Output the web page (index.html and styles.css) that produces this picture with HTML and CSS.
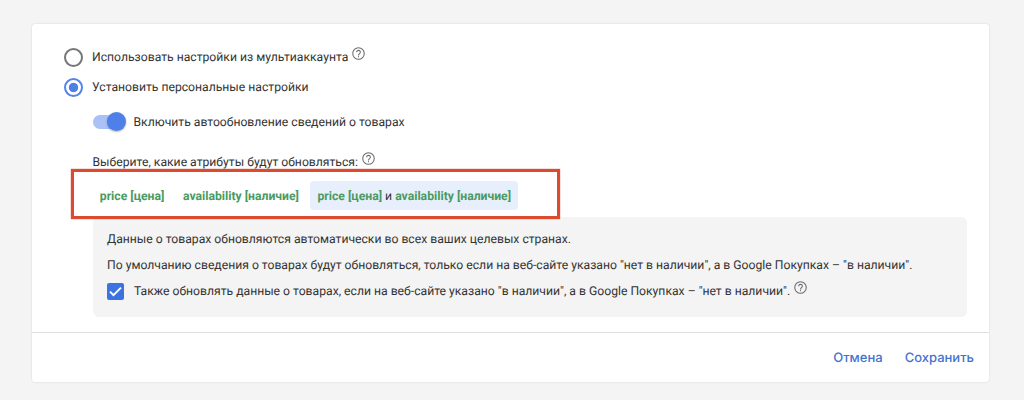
FILE: index.html
```html
<!DOCTYPE html>
<html lang="ru">
<head>
    <meta charset="UTF-8">
    <meta name="viewport" content="width=device-width, initial-scale=1.0">
    <title>Автообновление товаров</title>
    <link rel="stylesheet" href="styles.css">
</head>
<body>
    <svg class="defs" width="0" height="0">
        <symbol id="help" viewBox="0 0 24 24">
            <circle cx="12" cy="12" r="9.2"/>
            <path d="M9 10a3 3 0 1 1 6 0c0 2.1-3 2.3-3 5"/>
            <path d="M12 16.2v1.8"/>
        </symbol>
    </svg>

    <div class="card">
        <div class="settings">
            <div class="row">
                <span class="radio"></span>
                <span>Использовать настройки из мультиаккаунта</span>
                <svg class="help"><use href="#help"/></svg>
            </div>
            <div class="row">
                <span class="radio checked"></span>
                <span>Установить персональные настройки</span>
            </div>

            <div class="details">
                <div class="row toggle-row">
                    <span class="toggle"></span>
                    <span>Включить автообновление сведений о товарах</span>
                </div>
                <div class="row label-row">
                    <span>Выберите, какие атрибуты будут обновляться:</span>
                    <svg class="help"><use href="#help"/></svg>
                </div>

                <div class="attributes">
                    <span class="chip"><b>price [цена]</b></span>
                    <span class="chip"><b>availability [наличие]</b></span>
                    <span class="chip selected"><b>price [цена]</b> и <b>availability [наличие]</b></span>
                    <div class="highlight"></div>
                </div>

                <div class="panel">
                    <p>Данные о товарах обновляются автоматически во всех ваших целевых странах.</p>
                    <p>По умолчанию сведения о товарах будут обновляться, только если на веб-сайте указано "нет в наличии", а в Google Покупках – "в наличии".</p>
                    <div class="check-row">
                        <span class="checkbox">
                            <svg viewBox="0 0 17 17"><path d="M3 8.6l3.5 3.5L14 4.6"/></svg>
                        </span>
                        <span>Также обновлять данные о товарах, если на веб-сайте указано "в наличии", а в Google Покупках – "нет в наличии".</span>
                        <svg class="help"><use href="#help"/></svg>
                    </div>
                </div>
            </div>
        </div>

        <div class="actions">
            <a class="action">Отмена</a>
            <a class="action">Сохранить</a>
        </div>
    </div>
</body>
</html>
```
FILE: styles.css
```css
* {
    box-sizing: border-box;
}
body {
    margin: 0;
    padding: 24px 35px 0 32px;
    height: 400px;
    overflow: hidden;
    background-color: #f4f4f4;
    color: #333;
    font-family: Roboto, "Noto Sans", sans-serif;
    font-size: 12.18px;
    text-rendering: geometricPrecision;
    white-space: nowrap;
}
.defs {
    position: absolute;
}
.card {
    height: 358px;
    background-color: #fff;
    border-radius: 3px;
    box-shadow: 0 0 2px rgba(0, 0, 0, 0.16);
}
.settings {
    height: 308px;
    padding: 18px 22px 0 32px;
}
.row {
    display: flex;
    align-items: center;
    height: 30px;
}
.radio {
    width: 19px;
    height: 19px;
    margin-right: 9px;
    border: 2px solid #77777a;
    border-radius: 50%;
}
.radio.checked {
    border-color: #5383ec;
    background: radial-gradient(circle, #4f80ea 4.3px, #fff 5.1px);
}
.help {
    width: 15px;
    height: 15px;
    margin: 0 0 7px 3px;
    fill: none;
    stroke: #6c6c6c;
    stroke-width: 1.7;
}
.details {
    margin-left: 28.5px;
}
.toggle-row {
    height: 40px;
}
.toggle {
    position: relative;
    width: 30px;
    height: 14px;
    margin-right: 11px;
    border-radius: 7px;
    background-color: #a9c1f5;
}
.toggle::after {
    content: "";
    position: absolute;
    top: -3px;
    right: -3px;
    width: 19px;
    height: 19px;
    border-radius: 50%;
    background-color: #4f80ea;
    box-shadow: 0 1px 2px rgba(0, 0, 0, 0.3);
}
.label-row {
    height: 39px;
}
.attributes {
    position: relative;
    display: flex;
    height: 36px;
}
.chip {
    height: 29px;
    padding: 0 7.3px;
    margin-right: 4px;
    border-radius: 4px;
    line-height: 30px;
}
.chip b {
    color: #4b9a60;
}
.chip.selected {
    background-color: #e8effc;
}
.highlight {
    position: absolute;
    top: -12px;
    left: -21.5px;
    width: 489px;
    height: 50px;
    border: 3px solid #dc4a30;
    box-shadow: 0 0 1px #dc4a30;
}
.panel {
    height: 100px;
    padding: 9px 14.5px;
    border-radius: 6px;
    background-color: #f4f4f4;
}
.panel p {
    margin: 0;
    line-height: 26px;
}
.check-row {
    display: flex;
    align-items: center;
    height: 26px;
}
.checkbox {
    width: 17px;
    height: 17px;
    margin-right: 10px;
    border-radius: 2px;
    background-color: #3b73e0;
}
.checkbox svg {
    display: block;
    fill: none;
    stroke: #fff;
    stroke-width: 2;
}
.actions {
    display: flex;
    align-items: center;
    justify-content: flex-end;
    gap: 22px;
    height: 50px;
    padding-right: 15px;
    border-top: 1px solid #dfdfdf;
}
.action {
    color: #4472cf;
    font-family: Inter, sans-serif;
    font-size: 13px;
    font-weight: 500;
}
```
